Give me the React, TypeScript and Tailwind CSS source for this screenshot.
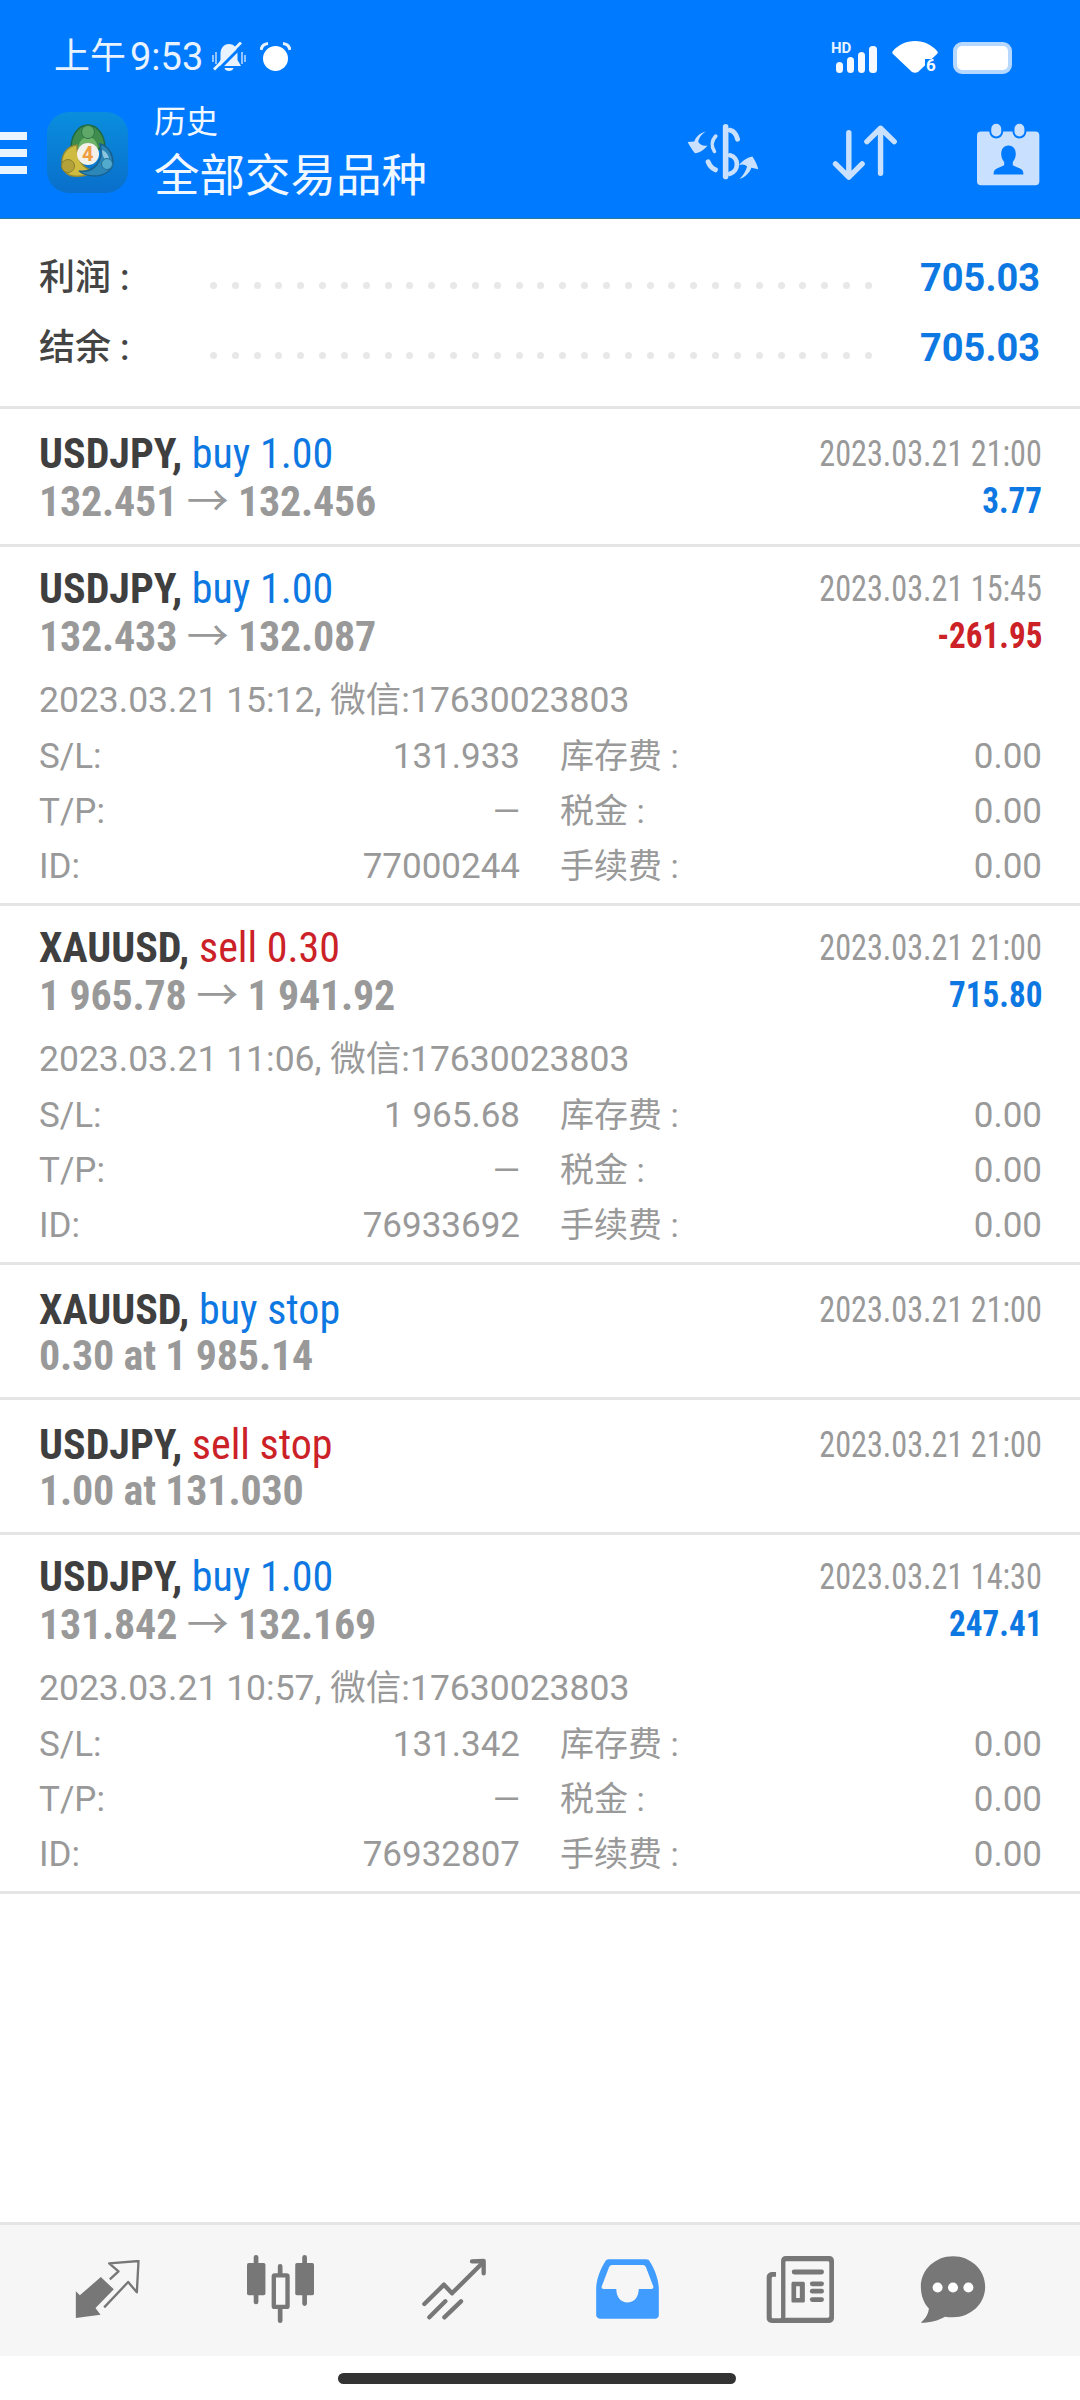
import React from 'react';

type Deal = {
  symbol: string;
  side: string;
  sideColor: string;
  price: string[];
  time: string;
  profit?: string;
  profitColor?: string;
  opened?: string;
  sl?: string;
  tp?: string;
  id?: string;
};

const BLUE = 'text-[#0e78e2]';
const RED = 'text-[#cb2127]';

const deals: Deal[] = [
  { symbol: 'USDJPY,', side: 'buy 1.00', sideColor: BLUE, price: ['132.451', '132.456'], time: '2023.03.21 21:00', profit: '3.77', profitColor: BLUE },
  { symbol: 'USDJPY,', side: 'buy 1.00', sideColor: BLUE, price: ['132.433', '132.087'], time: '2023.03.21 15:45', profit: '-261.95', profitColor: RED, opened: '2023.03.21 15:12', sl: '131.933', tp: '—', id: '77000244' },
  { symbol: 'XAUUSD,', side: 'sell 0.30', sideColor: RED, price: ['1 965.78', '1 941.92'], time: '2023.03.21 21:00', profit: '715.80', profitColor: BLUE, opened: '2023.03.21 11:06', sl: '1 965.68', tp: '—', id: '76933692' },
  { symbol: 'XAUUSD,', side: 'buy stop', sideColor: BLUE, price: ['0.30 at 1 985.14'], time: '2023.03.21 21:00' },
  { symbol: 'USDJPY,', side: 'sell stop', sideColor: RED, price: ['1.00 at 131.030'], time: '2023.03.21 21:00' },
  { symbol: 'USDJPY,', side: 'buy 1.00', sideColor: BLUE, price: ['131.842', '132.169'], time: '2023.03.21 14:30', profit: '247.41', profitColor: BLUE, opened: '2023.03.21 10:57', sl: '131.342', tp: '—', id: '76932807' },
];

function MuteBell() {
  return (
    <svg viewBox="0 0 34 31" className="w-[34px] h-[31px]">
      <path d="M17 2c-5.500 0-8.500 4.500-8.500 10v6L5 24h24l-3.500-6v-6C25.500 6.500 22.500 2 17 2z" fill="#e8f3ff" />
      <path d="M12.500 26h9c-.5 4-8.500 4-9 0z" fill="#e8f3ff" />
      <path d="M1 13v7M4 10v12M33 13v7M30 10v12" stroke="#9fcbff" strokeWidth="1.800" />
      <path d="M4 30L31 3" stroke="#007bff" strokeWidth="3" />
      <path d="M2 27.500L29 .5" stroke="#e8f3ff" strokeWidth="2.800" />
    </svg>
  );
}

function Alarm() {
  return (
    <svg viewBox="0 0 31 30" className="w-[31px] h-[30px]">
      <circle cx="15.500" cy="16.500" r="12.500" fill="#fff" />
      <path d="M1 8c.5-3 3-6 7-6.500M30 8c-.5-3-3-6-7-6.500" stroke="#e8f3ff" strokeWidth="3" fill="none" />
    </svg>
  );
}

function Signal() {
  return (
    <div className="relative w-[46px] h-[31px]">
      <span className="absolute left-0 top-[-3px] text-[15px] leading-[18px] font-bold text-[#e8f3ff]">HD</span>
      <svg viewBox="0 0 46 31" className="absolute inset-0 w-[46px] h-[31px]">
        <rect x="5" y="20" width="7" height="11" rx="3.500" fill="#f4f9ff" />
        <rect x="16" y="15" width="7" height="16" rx="3.500" fill="#f4f9ff" />
        <rect x="27" y="10" width="7" height="21" rx="3.500" fill="#f4f9ff" />
        <rect x="38" y="4" width="8" height="27" rx="3.500" fill="#f4f9ff" />
      </svg>
    </div>
  );
}

function Wifi() {
  return (
    <div className="relative w-[46px] h-[35px]">
      <svg viewBox="0 0 46 35" className="absolute inset-0 w-[46px] h-[35px]">
        <path d="M1 11C6 5 14 1 23 1s17 4 22 10c1 1 1 2 0 3L26 32c-2 1-4 1-6 0L1 14c-1-1-1-2 0-3z" fill="#fff" />
        <rect x="33" y="19" width="15" height="17" fill="#007bff" />
      </svg>
      <span className="absolute left-[34px] top-[16px] text-[17px] leading-[19px] font-bold text-[#f4f9ff]">6</span>
    </div>
  );
}

function Battery() {
  return (
    <div className="w-[59px] h-[32px] rounded-[9px] border-[4px] border-[#b6d8ff] bg-white" />
  );
}

function DollarSwap() {
  return (
    <svg viewBox="78 70 218 168" className="w-[72px] h-[56px]">
      <g fill="none" stroke="#c9e1ff" strokeLinecap="round">
        <path d="M195 78v150" strokeWidth="17" />
        <path d="M208 88c12 3 19 11 23 27" strokeWidth="15" />
        <path d="M165 106c-12 12-14 30-4 46" strokeWidth="11" />
        <path d="M142 184c4 11 11 19 22 24" strokeWidth="15" />
        <path d="M208 164c28 6 28 48 0 56" strokeWidth="14" />
      </g>
      <path d="M136 92c-16 3-30 14-36 30l-20 2c6 12 14 24 22 34 14-2 30-12 38-24-10 3-22 0-28-10 2-14 12-26 24-32z" fill="#c9e1ff" />
      <path d="M237 236c18-6 30-18 36-34l21 4c-4-14-10-26-18-38-14 2-32 14-40 26 10-4 18-2 24 4-4 14-12 28-23 38z" fill="#c9e1ff" />
    </svg>
  );
}

function SortArrows() {
  return (
    <svg viewBox="512 70 208 176" className="w-[66px] h-[58px]">
      <g fill="none" stroke="#c9e1ff" strokeWidth="17" strokeLinecap="round" strokeLinejoin="round">
        <path d="M565 94v140M523 192l42 42 42-42" />
        <path d="M665 222V80M622 122l43-42 43 42" />
      </g>
    </svg>
  );
}

function CalendarUser() {
  return (
    <svg viewBox="950 60 190 192" className="w-[63px] h-[64px]">
      <rect x="950" y="88" width="188" height="162" rx="12" fill="#c9e1ff" />
      <rect x="990" y="62" width="36" height="44" rx="18" fill="#c9e1ff" stroke="#007bff" strokeWidth="6" />
      <rect x="1060" y="62" width="36" height="44" rx="18" fill="#c9e1ff" stroke="#007bff" strokeWidth="6" />
      <path d="M1045 130c-15 0-22 12-22 26 0 10 4 18 9 24v10l-22 10c-7 3-10 8-10 18h90c0-10-3-15-10-18l-22-10v-10c5-6 9-14 9-24 0-14-7-26-22-26z" fill="#007bff" />
    </svg>
  );
}

function Mt4Logo() {
  return (
    <div className="relative w-[81px] h-[81px] rounded-[22px] bg-gradient-to-b from-[#0a8ede] to-[#0a6fca] shrink-0">
      <svg viewBox="0 0 81 81" className="absolute inset-0 w-[81px] h-[81px]">
        <path d="M41 13c-9 0-16 9-17 21l8 4h18l8-4c-1-12-8-21-17-21z" fill="#3f8c4c" stroke="#1f6a45" strokeWidth="1.500" />
        <path d="M41 24c-6 2-9 6-10 12h20c-1-6-4-10-10-12z" fill="#6fb568" />
        <circle cx="41" cy="20" r="6.500" fill="#5fa86a" stroke="#2c7548" strokeWidth="1" />
        <path d="M30 33c-10 1-15 9-15 17 0 7 4 13 11 14 8 1 17-1 23-5-12-1-19-9-19-26z" fill="#cfbb3f" stroke="#8f8a35" strokeWidth="1.500" />
        <circle cx="21" cy="54" r="6.500" fill="#b3a23a" stroke="#8a8030" strokeWidth="1" />
        <path d="M53 32c9 2 13 11 13 19-1 8-9 13-19 13-6 0-11-2-15-5 13 2 26-8 21-27z" fill="#2d86b8" stroke="#18618f" strokeWidth="1.500" />
        <path d="M55 38c6 2 8 9 7 13-4-2-7-7-7-13z" fill="#8cc6de" />
        <circle cx="60" cy="52" r="5.500" fill="#52aacd" stroke="#1f6f9c" strokeWidth="1" />
        <circle cx="41" cy="42" r="11" fill="#f4f1ea" />
      </svg>
      <span className="absolute left-[35px] top-[29px] text-[20px] leading-[26px] font-bold text-[#ef9d3f]">4</span>
    </div>
  );
}

function ExchangeIcon() {
  return (
    <svg viewBox="218 178 194 174" className="w-[67px] h-[58px]">
      <path d="M220 272l12 12 63-55 39 37-55 56 15 20-74 10z" fill="#777" strokeLinejoin="round" />
      <path d="M322 236l26-24-28-24 88-7-5 94-26-31-72 76" fill="none" stroke="#777" strokeWidth="7" strokeLinejoin="round" />
    </svg>
  );
}

function CandlesIcon() {
  return (
    <svg viewBox="716 163 200 203" className="w-[69px] h-[68px]">
      <g fill="#777">
        <rect x="716" y="187" width="55" height="96" rx="5" />
        <rect x="736" y="163" width="14" height="147" rx="7" />
        <rect x="860" y="187" width="56" height="96" rx="5" />
        <rect x="881" y="163" width="14" height="152" rx="7" />
        <rect x="808" y="190" width="14" height="176" rx="7" />
      </g>
      <rect x="796" y="224" width="41" height="94" rx="3" fill="#f6f6f6" stroke="#777" strokeWidth="13" />
    </svg>
  );
}

function ChartIcon() {
  return (
    <svg viewBox="1222 168 192 184" className="w-[64px] h-[62px]">
      <g fill="none" stroke="#777" strokeWidth="13" strokeLinecap="round" strokeLinejoin="round">
        <path d="M1229 305l59-58 24 26 92-92" />
        <path d="M1372 177l35-1v37" />
        <path d="M1244 345l48-48M1289 345l50-48" />
      </g>
    </svg>
  );
}

function InboxIcon() {
  return (
    <svg viewBox="158 170 192 182" className="w-[67px] h-[60px]">
      <path d="M198 171h112c6 0 9 2 12 7 14 22 27 54 27 82v80c0 6-4 11-10 11H170c-6 0-11-5-11-11v-80c0-28 13-60 27-82 3-5 6-7 12-7z" fill="#409cff" />
      <path d="M208 188h92c5 0 8 2 10 7l22 58c2 5-1 8-6 8h-38c0 26-15 41-34 41s-34-15-34-41h-38c-5 0-8-3-6-8l22-58c2-5 5-7 10-7z" fill="#f6f6f6" />
    </svg>
  );
}

function NewsIcon() {
  return (
    <svg viewBox="657 160 202 200" className="w-[69px] h-[67px]">
      <g fill="#777">
        <path d="M714 160h130c8 0 14 6 14 14v172c0 8-6 14-14 14H672c-8 0-15-6-15-14V224c0-9 7-16 16-16h12v14h-8c-3 0-5 2-5 5v114c0 3 2 5 5 5h20c2 0 3-1 3-3V174c0-8 6-14 14-14zm1 16c-1 0-2 1-2 2v163c0 2-1 3-2 3h128c3 0 5-2 5-5V181c0-3-2-5-5-5z" fillRule="evenodd" />
        <rect x="732" y="200" width="96" height="15" rx="7" />
        <path d="M736 237h30c3 0 5 2 5 5v52c0 3-2 5-5 5h-30c-3 0-5-2-5-5v-52c0-3 2-5 5-5zm9 13v35h11v-35z" fillRule="evenodd" />
        <rect x="786" y="236" width="42" height="14" rx="7" />
        <rect x="786" y="258" width="42" height="14" rx="7" />
        <rect x="786" y="283" width="42" height="14" rx="7" />
      </g>
    </svg>
  );
}

function ChatIcon() {
  return (
    <svg viewBox="1103 160 192 200" className="w-[66px] h-[67px]">
      <path d="M1199 161c53 0 96 40 96 91s-43 91-96 91c-8 0-16-1-24-2-18 10-40 18-72 18 14-12 22-24 24-42-14-14-24-38-24-65 0-51 43-91 96-91z" fill="#777" />
      <circle cx="1153" cy="254" r="15" fill="#fff" />
      <circle cx="1199" cy="254" r="15" fill="#fff" />
      <circle cx="1245" cy="254" r="15" fill="#fff" />
    </svg>
  );
}

function SummaryRow({ label }: { label: string }) {
  return (
    <div className="flex items-center h-[70px]">
      <div className="w-[171px] text-[36px] font-medium text-[#444]">{label}</div>
      <div className="w-[662px] flex justify-between mt-[14px]">
        {Array.from({ length: 31 }).map((_, i) => (
          <span key={i} className="w-[7px] h-[7px] rounded-full bg-[#e8e8e8]" />
        ))}
      </div>
      <div className="ml-[48px] w-[120px] text-right text-[38px] font-bold text-[#0e78e2]">705.03</div>
    </div>
  );
}

function Details({ deal }: { deal: Deal }) {
  const rows = [
    ['S/L:', deal.sl, '库存费 :'],
    ['T/P:', deal.tp, '税金 :'],
    ['ID:', deal.id, '手续费 :'],
  ];
  return (
    <div className="mt-[13px] text-[35px] leading-[55px] text-[#999]">
      <div className="text-[35.500px] mb-[1px]">{deal.opened}, 微信:17630023803</div>
      {rows.map(([a, b, c]) => (
        <div key={a} className="flex">
          <span className="w-[121px]">{a}</span>
          <span className="w-[360px] text-right">{b}</span>
          <span className="ml-[40px] flex-1 text-[34px]">{c}</span>
          <span>0.00</span>
        </div>
      ))}
    </div>
  );
}

function DealRow({ deal }: { deal: Deal }) {
  // pending orders have no profit line, so their second line sits tighter
  let spacing = 'pt-[21px] pb-[19px]';
  if (deal.opened) spacing = 'pt-[18px] pb-[9px]';

  return (
    <div className={`pl-[39px] pr-[38px] border-b-[3px] border-[#e5e5e5] ${spacing}`}>
      <div className="flex justify-between [font-stretch:75%]">
        <div className="text-[42px]">
          <div className="leading-[48px]">
            <span className="font-bold text-[#3f3f3f]">{deal.symbol}</span>{' '}
            <span className={deal.sideColor}>{deal.side}</span>
          </div>
          <div className={`font-bold text-[#999] tracking-[-0.2px] ${deal.profit ? 'leading-[47px]' : 'leading-[44px]'}`}>
            {deal.price[0]}
            {deal.price[1] && (
              <>
                {' '}
                <span className="font-normal">→</span> {deal.price[1]}
              </>
            )}
          </div>
        </div>
        <div className="flex flex-col items-end">
          <div className="leading-[48px] text-[37px] text-[#999] origin-right scale-x-[0.87]">{deal.time}</div>
          {deal.profit && (
            <div className={`leading-[47px] text-[36px] font-bold origin-right scale-x-[0.92] ${deal.profitColor}`}>{deal.profit}</div>
          )}
        </div>
      </div>
      {deal.opened && <Details deal={deal} />}
    </div>
  );
}

export default function App() {
  return (
    <div className="w-[1080px] h-[2400px] flex flex-col bg-white font-['Roboto','Noto_Sans_CJK_SC',sans-serif]">
      <header className="h-[219px] bg-[#007bff] border-b border-[#2b7a9a] shrink-0">
        <div className="h-[109px] flex items-start pt-[41px] pl-[54px] pr-[68px]">
          <div className="flex items-center text-[#e8f3ff] h-[32px]">
            <span className="text-[36px]">上午</span>
            <span className="text-[38px] ml-[4px]">9:53</span>
            <div className="ml-[9px]"><MuteBell /></div>
            <div className="ml-[14px]"><Alarm /></div>
          </div>
          <div className="ml-auto flex items-center gap-[15px] -mt-[1px]">
            <Signal />
            <Wifi />
            <Battery />
          </div>
        </div>
        <div className="flex items-center h-[86px]">
          <div className="w-[27px] flex flex-col gap-[9px] shrink-0 mt-[2px]">
            <span className="h-[8px] bg-[#eaf4ff]" />
            <span className="h-[8px] bg-[#eaf4ff]" />
            <span className="h-[8px] bg-[#eaf4ff]" />
          </div>
          <div className="ml-[20px]"><Mt4Logo /></div>
          <div className="ml-[26px] mt-[3px] text-[#f2f8ff]">
            <div className="text-[32px] leading-[40px]">历史</div>
            <div className="text-[45.500px] leading-[56px] mt-[7px]">全部交易品种</div>
          </div>
          <div className="ml-auto flex items-center pr-[40px]">
            <DollarSwap />
            <div className="ml-[73px] mt-[1px]"><SortArrows /></div>
            <div className="ml-[79px] mt-[3px]"><CalendarUser /></div>
          </div>
        </div>
      </header>

      <main className="flex-1">
        <section className="pl-[39px] pr-[38px] pt-[24px] pb-[23px] border-b-[3px] border-[#e5e5e5]">
          <SummaryRow label="利润 :" />
          <SummaryRow label="结余 :" />
        </section>
        {deals.map((d, i) => (
          <DealRow key={i} deal={d} />
        ))}
      </main>

      <nav className="h-[134px] bg-[#f6f6f6] border-t-[3px] border-[#e5e5e5] flex items-center pl-[74px] pb-[3px] shrink-0">
        <ExchangeIcon />
        <div className="ml-[105px]"><CandlesIcon /></div>
        <div className="ml-[107px]"><ChartIcon /></div>
        <div className="ml-[108px]"><InboxIcon /></div>
        <div className="ml-[105px]"><NewsIcon /></div>
        <div className="ml-[85px]"><ChatIcon /></div>
      </nav>
      <div className="h-[44px] flex justify-center pt-[17px] pr-[6px] shrink-0">
        <span className="w-[398px] h-[11px] rounded-full bg-[#333]" />
      </div>
    </div>
  );
}
